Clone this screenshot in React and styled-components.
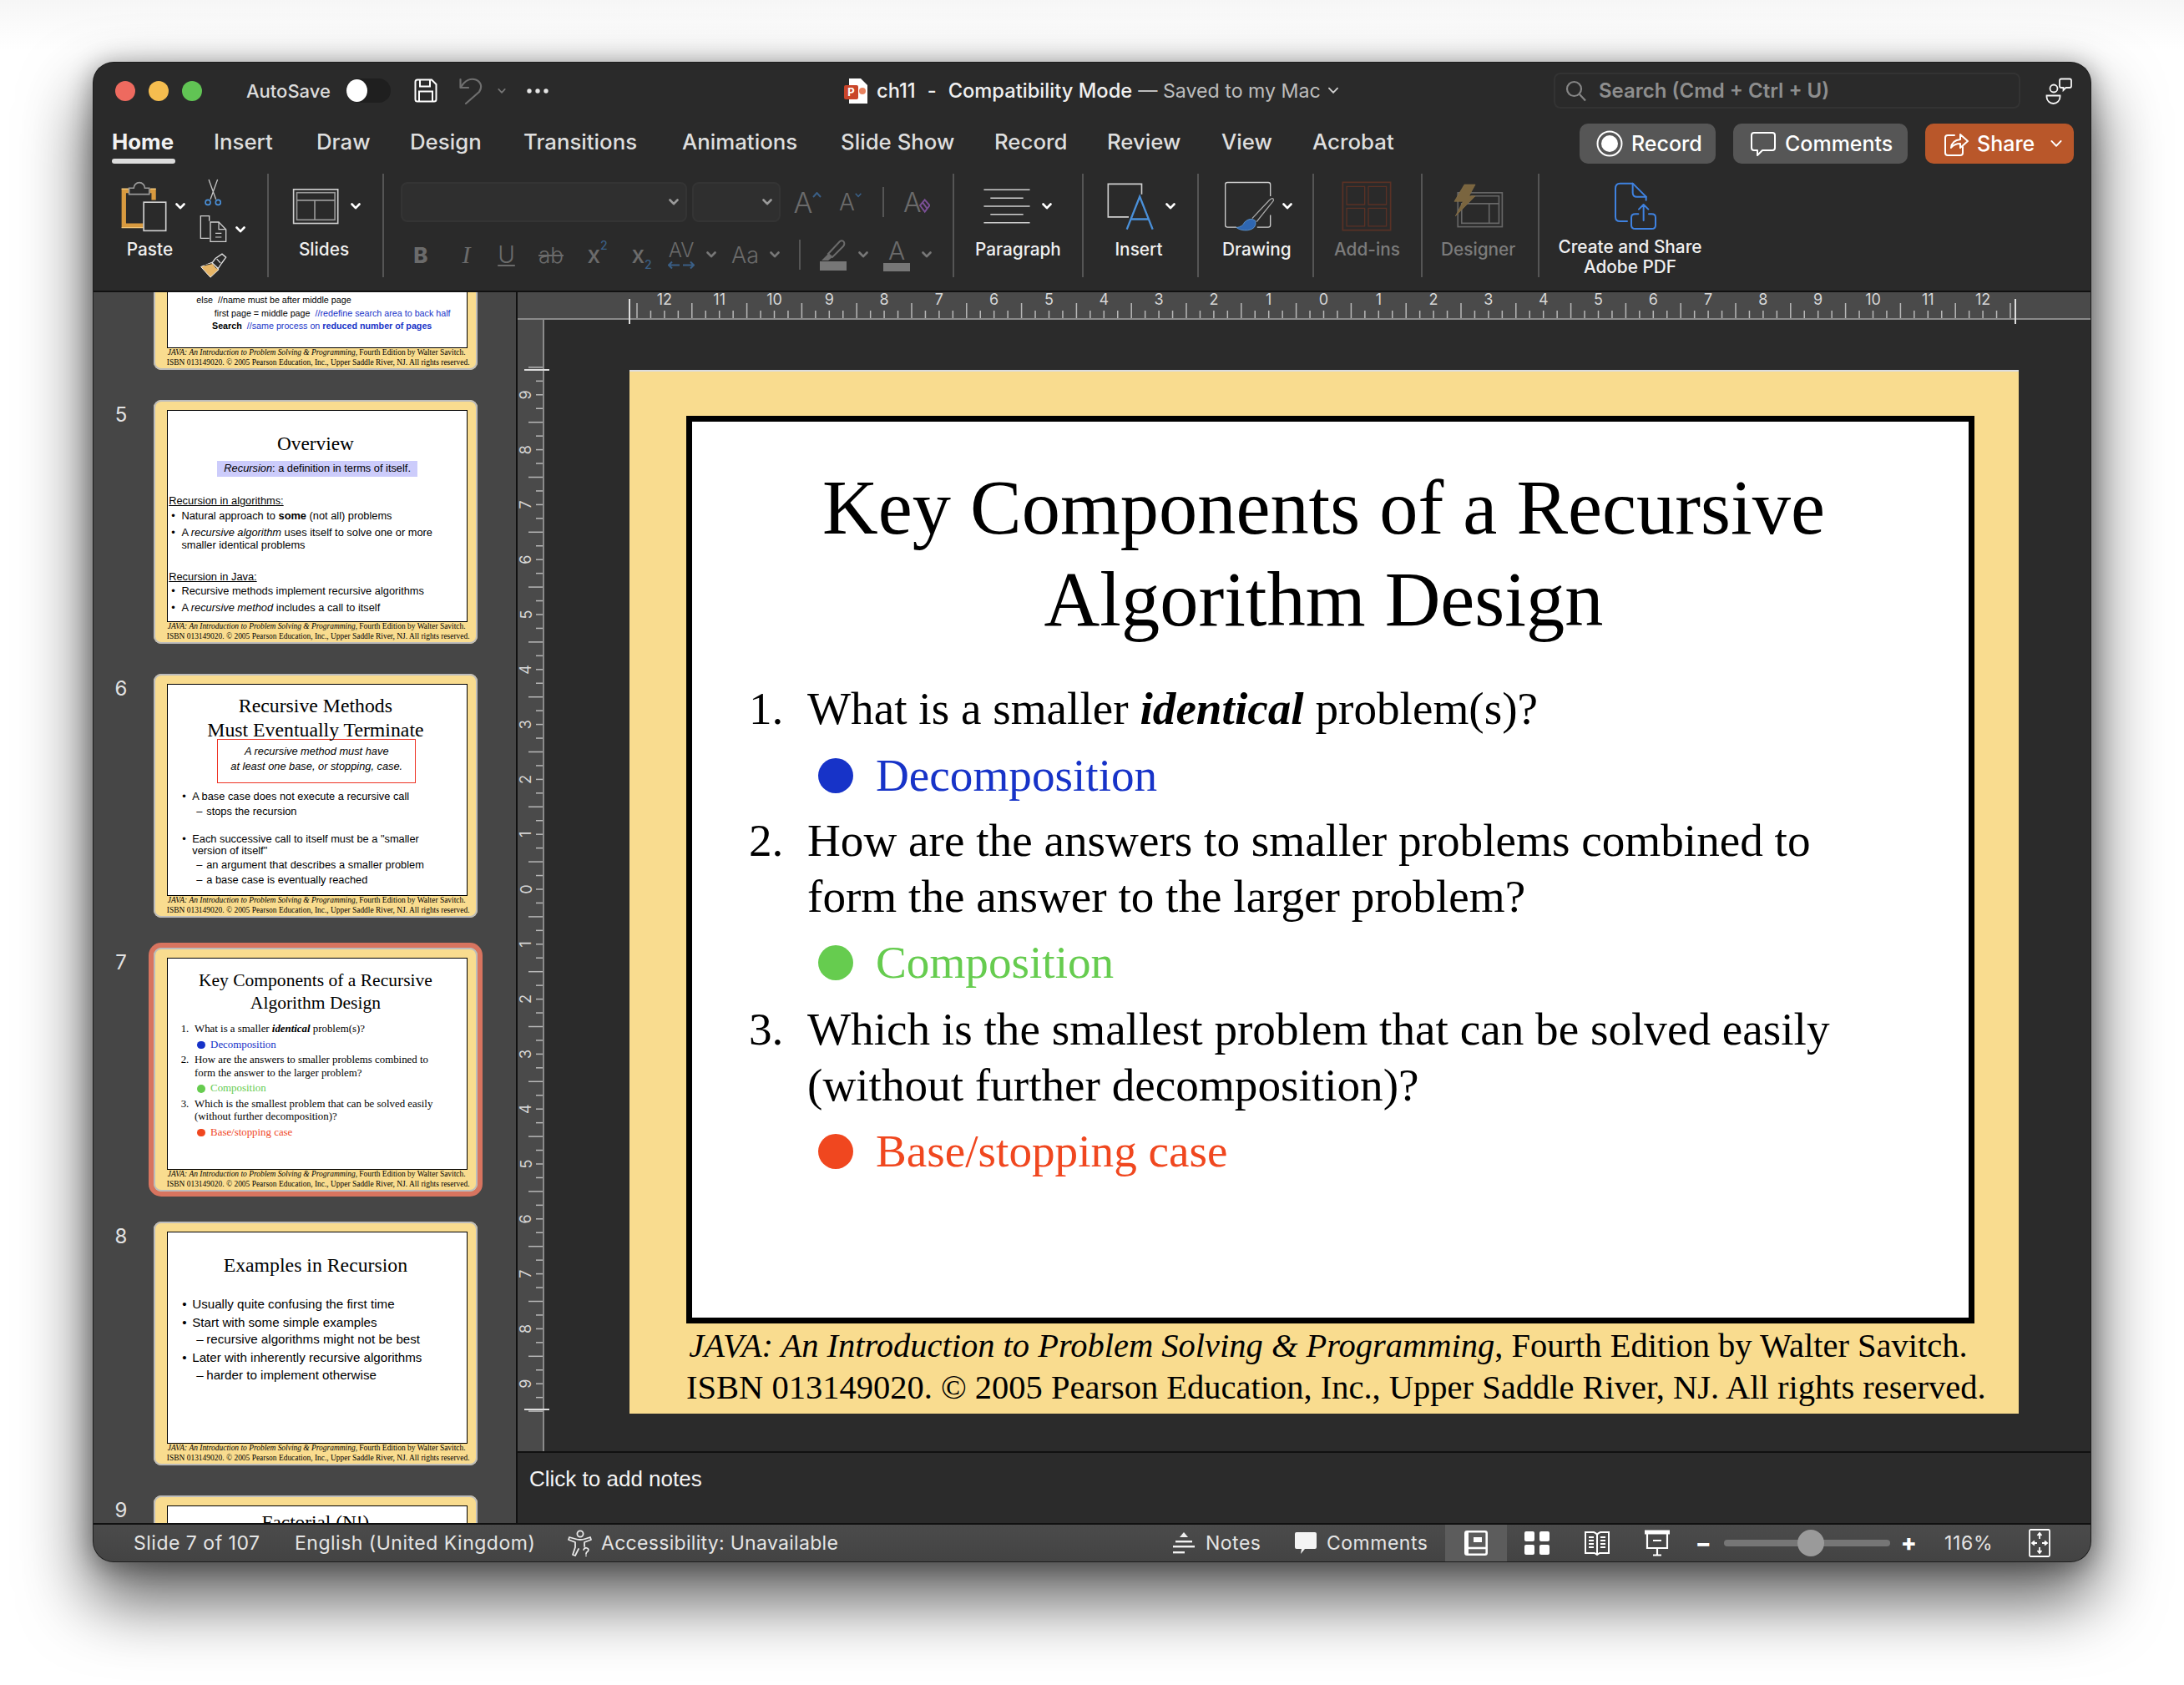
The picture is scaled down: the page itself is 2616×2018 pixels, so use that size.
import React from 'react';
import styled, { createGlobalStyle } from 'styled-components';

const UI = `Inter, "Noto Sans", sans-serif`;
const SERIF = `"Liberation Serif", "Times New Roman", serif`;
const SANS = `"Liberation Sans", Arial, sans-serif`;

const Global = createGlobalStyle`
  html, body { margin: 0; padding: 0; background: #fff; }
  #root { width: 2616px; height: 2018px; overflow: hidden; }
  * { box-sizing: border-box; }
`;

const Page = styled.div`
  width: 2616px;
  height: 2018px;
  padding: 75px 112px 0;
  background: linear-gradient(#f6f6f6, #fff 60px);
  font-family: ${UI};
`;

const Win = styled.div`
  width: 2392px;
  height: 1795px;
  border-radius: 24px;
  background: #2a2a2a;
  overflow: hidden;
  display: flex;
  flex-direction: column;
  color: #fff;
  position: relative;
  box-shadow: 0 0 0 1px #1e1e1e, 0 42px 80px 6px rgba(0, 0, 0, 0.62), 0 4px 28px 4px rgba(0, 0, 0, 0.3);
`;

/* title bar */
const TitleBar = styled.div`
  height: 67px;
  flex: none;
  display: flex;
  align-items: center;
  padding: 0 22px 0 26px;
`;
const Light = styled.span`
  width: 24px;
  height: 24px;
  border-radius: 50%;
  margin-right: 16px;
  background: ${p => p.$c};
`;
const AutoSave = styled.span`
  width: 120px;
  margin-left: 37px;
  font-size: 22px;
  font-weight: 500;
  color: #dcdcdc;
`;
const Toggle = styled.span`
  width: 53px;
  height: 29px;
  border-radius: 15px;
  background: #1f1f1f;
  display: flex;
  align-items: center;
`;
const Knob = styled.span`
  width: 25px;
  height: 27px;
  border-radius: 50%;
  background: #fff;
`;
const BarIcon = styled.span`
  display: flex;
  align-items: center;
  flex: none;
  margin-left: ${p => p.$ml || 0}px;
`;
const DocTitle = styled.span`
  margin-left: ${p => p.$ml || 0}px;
  font-size: ${p => (p.$dim ? 23.2 : 23.7)}px;
  font-weight: ${p => (p.$dim ? 400 : 500)};
  color: ${p => (p.$dim ? '#bdbdbd' : '#f0f0f0')};
  white-space: pre;
`;
const Search = styled.div`
  width: 559px;
  height: 43px;
  margin-left: auto;
  border: 2px solid #333;
  border-radius: 8px;
  display: flex;
  align-items: center;
  padding-left: 12px;
  gap: 14px;
  font-size: 24px;
  font-weight: 600;
  color: #8e8e8e;
`;

/* tabs */
const TabBar = styled.div`
  height: 66px;
  flex: none;
  display: flex;
  padding: 0 20px 0 22px;
`;
const Tab = styled.div`
  width: ${p => p.$w}px;
  height: 56px;
  padding-top: 10px;
  line-height: 36px;
  font-size: 25.8px;
  font-weight: ${p => (p.$on ? 700 : 500)};
  color: ${p => (p.$on ? '#f2f2f2' : '#dedede')};
  white-space: nowrap;
`;
const TabLine = styled.div`
  width: 76px;
  height: 6px;
  margin-top: 2px;
  border-radius: 3px;
  background: #dcdcdc;
`;
const Actions = styled.div`
  margin-left: auto;
  display: flex;
  gap: 21px;
  padding-top: 6px;
`;
const ActionBtn = styled.button`
  width: ${p => p.$w}px;
  height: 48px;
  padding: 0 0 0 ${p => p.$pl}px;
  border: 0;
  border-radius: 10px;
  background: ${p => (p.$share ? '#b9572a' : '#565656')};
  color: #fff;
  display: flex;
  align-items: center;
  gap: 10px;
  font-family: ${UI};
  font-size: 25px;
  font-weight: 500;
`;

/* ribbon */
const Ribbon = styled.div`
  height: 142px;
  flex: none;
  display: flex;
  border-bottom: 2px solid #111;
`;
const Group = styled.div`
  width: ${p => p.$w}px;
  height: 124px;
  padding-left: ${p => p.$pl}px;
  display: flex;
  flex: none;
  border-right: ${p => (p.$last ? 'none' : '2px solid #555')};
`;
const Tool = styled.div`
  display: flex;
  flex-direction: column;
  align-items: center;
  width: ${p => (p.$w ? `${p.$w}px` : 'auto')};
`;
const ToolRow = styled.div`
  height: 77px;
  padding: ${p => p.$pt || 0}px 0 0 ${p => p.$ml || 0}px;
  display: flex;
  align-items: center;
  gap: ${p => p.$gap ?? 14}px;
`;
const ToolLabel = styled.div`
  font-size: 20.8px;
  line-height: 28px;
  font-weight: 500;
  white-space: nowrap;
  text-align: center;
  padding-right: ${p => p.$pr || 0}px;
  color: ${p => (p.$dim ? '#7b7b7b' : '#f0f0f0')};
  ${p => p.$two && 'line-height: 24px; padding-top: 5px;'}
`;
const Clip = styled.div`
  margin-left: 16px;
  padding-top: 6px;
  display: flex;
  flex-direction: column;
`;
const ClipRow = styled.div`
  display: flex;
  align-items: center;
  gap: 9px;
  margin-top: ${p => p.$mt || 0}px;
  margin-left: ${p => p.$ml || 0}px;
`;
const FontCol = styled.div`
  padding-top: 10px;
`;
const FontRow = styled.div`
  display: flex;
  height: 48px;
`;
const FontRowB = styled(FontRow)`
  height: 40px;
  margin-top: 19px;
`;
const FontBox = styled.div`
  width: ${p => p.$w}px;
  height: 48px;
  margin-left: ${p => p.$ml || 0}px;
  border: 2px solid #343434;
  border-radius: 8px;
  background: #2f2f2f;
  display: flex;
  align-items: center;
  justify-content: flex-end;
  padding-right: 8px;
`;
const Cell = styled.span`
  width: ${p => p.$w}px;
  margin-left: ${p => p.$ml || 0}px;
  flex: none;
  display: flex;
  align-items: center;
  justify-content: center;
  white-space: nowrap;
  color: #6b6b6b;
  font-family: ${p => (p.$serif ? SERIF : UI)};
  font-size: ${p => p.$size || 28}px;
  font-weight: ${p => p.$weight || 300};
  font-style: ${p => (p.$italic ? 'italic' : 'normal')};
`;
const Stack = styled(Cell)`
  flex-direction: column;
  line-height: 1;
`;
const Index = styled.span`
  font-size: 14px;
  color: #3a5f86;
  align-self: ${p => (p.$up ? 'flex-start' : 'flex-end')};
`;
const Bar = styled.span`
  width: 32px;
  height: 11px;
  background: #777;
  display: block;
`;
const Rule = styled.span`
  width: 2px;
  height: 36px;
  margin: auto 0 auto ${p => p.$ml}px;
  flex: none;
  background: #555;
`;
const CaretSvg = styled.svg`
  margin-bottom: 18px;
`;
const EraserSvg = styled.svg`
  margin: 8px 0 0 -3px;
`;

/* work area */
const Body = styled.div`
  flex: 1;
  min-height: 0;
  display: flex;
`;
const Side = styled.div`
  width: 508px;
  flex: none;
  background: #464646;
  border-right: 2px solid #111;
  overflow: hidden;
`;
const SideList = styled.div`
  margin-top: -199px;
`;
const ThumbRow = styled.div`
  display: flex;
  margin-bottom: 36px;
`;
const ThumbNo = styled.div`
  width: 66px;
  margin-right: 6px;
  padding-top: 2px;
  text-align: center;
  font-size: 24px;
  line-height: 32px;
  color: #e2e2e2;
`;
const Thumb = styled.div`
  width: 388px;
  height: 292px;
  flex: none;
  border-radius: 9px;
  position: relative;
  box-shadow: ${p => (p.$on ? '0 0 0 6px #d8745f' : 'none')};
  &::after {
    content: '';
    position: absolute;
    inset: 0;
    border-radius: 9px;
    border: 2px solid #bcbcbc;
  }
`;
const ThumbClip = styled.div`
  width: 388px;
  height: 292px;
  overflow: hidden;
  border-radius: 9px;
`;

const Work = styled.div`
  flex: 1;
  min-width: 0;
  display: flex;
  flex-direction: column;
`;
const HRuler = styled.div`
  height: 33px;
  flex: none;
  background: #4a4a4a;
  border-bottom: 2px solid #8a8a8a;
  position: relative;
  z-index: 2;
`;
const RulerSvg = styled.svg`
  display: block;
  overflow: visible;
  font-family: ${UI};
`;
const Stage = styled.div`
  flex: 1;
  min-height: 0;
  display: flex;
`;
const VRuler = styled.div`
  width: 32px;
  flex: none;
  background: #4a4a4a;
  border-right: 2px solid #8a8a8a;
  position: relative;
  z-index: 2;
`;
const Canvas = styled.div`
  flex: 1;
  min-width: 0;
  padding: 60px 0 0 102px;
  background: #2b2b2b;
`;
const Notes = styled.div`
  height: 86px;
  flex: none;
  border-top: 2px solid #111;
  background: #2b2b2b;
  padding: 15px 0 0 14px;
  font-family: ${SANS};
  font-size: 26px;
  line-height: 32px;
  color: #f4f4f4;
`;

/* slide */
const Face = styled.div`
  width: 1664px;
  height: 1250px;
  padding: 53px 53px 0 68px;
  background: #f9dc8f;
  border-top: ${p => (p.$big ? '2px solid #ddd' : 'none')};
  zoom: ${p => (p.$big ? 1 : 0.2332)};
  color: #000;
  flex: none;
`;
const Frame = styled.div`
  height: 1087px;
  border: 7px solid #000;
  background: #fff;
  overflow: hidden;
`;
const Foot = styled.div`
  margin-top: 2px;
  padding-right: 5px;
  text-align: center;
  font-family: ${SERIF};
  font-size: 40.5px;
  line-height: 50px;
  white-space: nowrap;
`;
const Heading = styled.div`
  margin-top: ${p => p.$t}px;
  padding-right: 16px;
  text-align: center;
  font-family: ${SERIF};
  font-size: ${p => p.$size}px;
  line-height: ${p => p.$lh}px;
  white-space: nowrap;
`;
const Ask = styled.div`
  display: flex;
  margin-top: ${p => p.$t || 0}px;
  padding-left: 68px;
  font-family: ${SERIF};
  font-size: 55.2px;
  line-height: 67px;
  white-space: nowrap;
`;
const AskNo = styled.span`
  width: 70px;
  flex: none;
`;
const Answer = styled.div`
  display: flex;
  align-items: center;
  gap: 27px;
  margin-top: ${p => p.$t}px;
  padding-left: 151px;
  font-family: ${SERIF};
  font-size: 55.2px;
  line-height: 67px;
  color: ${p => p.$c};
  white-space: nowrap;
`;
const Dot = styled.span`
  width: 42px;
  height: 42px;
  border-radius: 50%;
  background: ${p => p.$c};
`;
const Line = styled.div`
  height: 60px;
  margin-top: ${p => p.$t || 0}px;
  padding-left: ${p => p.$x || 0}px;
  font-family: ${SANS};
  font-size: ${p => p.$size || 55}px;
  line-height: 60px;
  white-space: pre;
`;
const Mark = styled.span`
  display: inline-block;
  width: ${p => p.$w}px;
`;
const Banner = styled.div`
  width: 1028px;
  height: 81px;
  margin: 37px 0 0 255px;
  background: #ccccfb;
  font-family: ${SANS};
  font-size: 55px;
  line-height: 81px;
  text-align: center;
`;
const RedBox = styled.div`
  width: 1020px;
  height: 227px;
  margin: -17px 0 0 255px;
  border: 6px solid #ee3324;
  padding-top: 22px;
  font-family: ${SANS};
  font-size: 55px;
  font-style: italic;
  line-height: 75px;
  text-align: center;
  white-space: nowrap;
`;
const Hi = styled.span`
  color: #1733c8;
  font-weight: ${p => (p.$b ? 700 : 400)};
`;
const Under = styled.span`
  text-decoration: underline;
`;

/* status bar */
const Status = styled.div`
  height: 46px;
  flex: none;
  border-top: 2px solid #111;
  background: linear-gradient(#4b4b4b, #434343);
  display: flex;
  align-items: center;
  padding: 0 48px 0 48px;
  font-size: 23px;
  letter-spacing: 0.5px;
  color: #e4e4e4;
`;
const StatusText = styled.span`
  width: ${p => (p.$w ? `${p.$w}px` : 'auto')};
  margin-left: ${p => p.$ml || 0}px;
  flex: none;
  white-space: nowrap;
  letter-spacing: ${p => p.$ls ?? 0.5}px;
`;
const ZoomGlyph = styled(StatusText)`
  display: flex;
  justify-content: center;
  font-weight: 800;
  font-size: 28px;
  color: #fff;
`;
const StatusRight = styled.div`
  margin-left: auto;
  height: 100%;
  display: flex;
  align-items: center;
`;
const ViewBtn = styled.span`
  width: ${p => p.$w || 72}px;
  height: 100%;
  flex: none;
  display: flex;
  align-items: center;
  justify-content: center;
  background: ${p => (p.$on ? '#5c5c5c' : 'transparent')};
`;
const Zoomer = styled.span`
  width: 199px;
  height: 8px;
  margin-left: 19px;
  border-radius: 4px;
  background: #767676;
  position: relative;
  &::after {
    content: '';
    position: absolute;
    left: 88px;
    top: -12px;
    width: 32px;
    height: 32px;
    border-radius: 50%;
    background: #9a9a9a;
  }
`;

/* small drawings */
const Chev = ({ c = '#fff', w = 12, h = 8, sw = 2.6 }) => (
  <svg width={w} height={h} viewBox="0 0 12 8" fill="none" stroke={c} strokeWidth={sw} strokeLinecap="round" strokeLinejoin="round">
    <path d="M1.5 1.5 6 6.2l4.5-4.7" />
  </svg>
);
const PasteIcon = () => (
  <svg width="58" height="62" viewBox="40 35 175 185" fill="none">
    <path d="M74 72H56V197H126" stroke="#d89a3f" strokeWidth="16" />
    <path d="M150 72H164V105" stroke="#d89a3f" strokeWidth="16" />
    <path d="M48 65H74M48 205H126M152 65H172" stroke="#f0c579" strokeWidth="4" />
    <path d="M75 84V62H92A20 20 0 0 1 132 62H148V84Z" fill="#2a2a2a" stroke="#999" strokeWidth="5" />
    <rect x="128" y="113" width="80" height="103" stroke="#d0d0d0" strokeWidth="5" />
  </svg>
);
const Scissors = () => (
  <svg width="25" height="33" viewBox="335 25 75 100" fill="none">
    <path d="M356 28 382 100M388 28 362 100" stroke="#c4c4c4" strokeWidth="4" />
    <circle cx="353" cy="111" r="9" stroke="#4a90d9" strokeWidth="5" />
    <circle cx="390" cy="111" r="9" stroke="#4a90d9" strokeWidth="5" />
  </svg>
);
const CopyIcon = () => (
  <svg width="35" height="35" viewBox="320 155 105 105" fill="none" stroke="#cfcfcf" strokeWidth="4">
    <path d="M358 178V160H327V240H358" />
    <path d="M362 182H392L418 208V252H362Z" />
    <path d="M392 182V208H418M380 222H402M380 236H402" strokeWidth="3.5" />
  </svg>
);
const PainterIcon = () => (
  <svg width="35" height="32" viewBox="320 288 105 95" fill="none">
    <path d="M328 340 368 324 392 350 362 378Z" fill="#e6b566" stroke="#eee" strokeWidth="3" />
    <path d="M340 335 370 328 384 346" stroke="#2a2a2a" strokeWidth="3" />
    <path d="M368 326 380 310 404 294 418 306 402 328 390 346Z" fill="#2a2a2a" stroke="#ddd" strokeWidth="4" />
    <path d="M385 312 398 326" stroke="#ddd" strokeWidth="4" />
  </svg>
);
const LayoutIcon = () => (
  <svg width="56" height="44" viewBox="658 56 172 132" fill="none">
    <rect x="663" y="60" width="163" height="125" stroke="#d0d0d0" strokeWidth="5" />
    <rect x="675" y="72" width="140" height="100" stroke="#999" strokeWidth="5" />
    <path d="M675 100H815M741 100V172" stroke="#999" strokeWidth="5" />
  </svg>
);
const ParagraphIcon = () => (
  <svg width="56" height="42" viewBox="90 56 168 128" fill="none" stroke="#cfcfcf" strokeWidth="4.5">
    <path d="M90 60H258M114 90H234M90 120H258M114 150H234M90 180H258" />
  </svg>
);
const InsertIcon = () => (
  <svg width="56" height="56" viewBox="526 38 170 170" fill="none">
    <path d="M605 162H530V42H652V80" stroke="#cfcfcf" strokeWidth="5" />
    <path d="M598 207 645 88 692 207M612 170H680" stroke="#4a90d9" strokeWidth="7" />
  </svg>
);
const DrawingIcon = () => (
  <svg width="61" height="60" viewBox="940 38 184 180" fill="none">
    <path d="M1108 92V50Q1108 42 1100 42H953Q945 42 945 50V196Q945 204 953 204H985M1060 204H1100Q1108 204 1108 196V160" stroke="#cfcfcf" strokeWidth="4" />
    <path d="M1042 172 1104 106Q1120 92 1119 108L1058 184" stroke="#a8a8a8" strokeWidth="4" />
    <path d="M985 205Q1008 202 1014 186 1034 166 1054 180 1060 210 1026 215 1000 217 985 205Z" fill="#2f67b2" stroke="#6fa8e0" strokeWidth="2" />
  </svg>
);
const AddinsIcon = () => (
  <svg width="60" height="60" viewBox="1370 34 178 178" fill="none" stroke="#5a3125">
    <rect x="1374" y="38" width="170" height="170" strokeWidth="5" />
    <path d="M1388 53h64v64h-64zM1465 53h64v64h-64zM1388 130h64v64h-64zM1465 130h64v64h-64z" strokeWidth="4" />
  </svg>
);
const DesignerIcon = () => (
  <svg width="60" height="55" viewBox="205 27 184 162" fill="none">
    <rect x="221" y="60" width="163" height="125" stroke="#676767" strokeWidth="5" />
    <path d="M235 172V100H372V172ZM336 100V172M270 72H372V100" stroke="#676767" strokeWidth="5" />
    <path d="M245 30H285L262 72H285L212 146 240 92H208Z" fill="#7a653f" stroke="#8a7248" strokeWidth="2" />
  </svg>
);
const PdfIcon = () => (
  <svg width="52" height="58" viewBox="792 47 156 174" fill="none" stroke="#3f82e0" strokeWidth="6" strokeLinecap="round" strokeLinejoin="round">
    <path d="M840 188H815Q798 188 798 172V70Q798 52 815 52H860L908 100V112" />
    <path d="M860 52V85Q860 100 875 100H908" />
    <path d="M880 162H870Q855 162 855 175V202Q855 215 870 215H928Q942 215 942 202V175Q942 162 928 162H918" />
    <path d="M899 185V128M882 145 899 128 916 145" />
  </svg>
);
const SearchIcon = () => (
  <svg width="26" height="26" viewBox="0 0 26 26" fill="none" stroke="#858585" strokeWidth="2.2">
    <circle cx="10.5" cy="10.5" r="8.5" />
    <path d="m17 17 7 7.5" />
  </svg>
);
const PeopleIcon = () => (
  <svg width="32" height="32" viewBox="0 0 32 32" fill="none" stroke="#f4f4f4" strokeWidth="1.8">
    <circle cx="10" cy="13" r="4.5" />
    <path d="M1.500 21.500H17.500V23A8 8 0 0 1 1.500 23Z" />
    <path d="M19 1.500H29Q31 1.500 31 3.500V10Q31 12 29 12H24.500L21.500 15V12H19Q17 12 17 10V3.500Q17 1.500 19 1.500Z" />
  </svg>
);
const RecordIcon = () => (
  <svg width="32" height="32" viewBox="0 0 32 32" fill="none">
    <circle cx="16" cy="16" r="14.5" stroke="#fff" strokeWidth="2" />
    <circle cx="16" cy="16" r="10" fill="#fff" />
  </svg>
);
const CommentIcon = () => (
  <svg width="32" height="32" viewBox="0 0 32 32" fill="none" stroke="#fff" strokeWidth="2" strokeLinejoin="round">
    <path d="M5 3H27Q30 3 30 6V21Q30 24 27 24H15L9 30V24H5Q2 24 2 21V6Q2 3 5 3Z" />
  </svg>
);
const ShareIcon = () => (
  <svg width="30" height="32" viewBox="0 0 30 32" fill="none" stroke="#fff" strokeWidth="2" strokeLinecap="round" strokeLinejoin="round">
    <path d="M13 6H5Q2 6 2 9V27Q2 30 5 30H20Q23 30 23 27V20" />
    <path d="M9 21Q10 12 20 11V5L29 13 20 21V16Q13 16 9 21Z" />
  </svg>
);
const SaveIcon = () => (
  <svg width="28" height="29" viewBox="0 0 28 29" fill="none" stroke="#fff" strokeWidth="2">
    <path d="M4 1.500H21L26.500 7V25Q26.500 27.500 24 27.500H4Q1.500 27.500 1.500 25V4Q1.500 1.500 4 1.500Z" />
    <path d="M7 1.500V9.500H19V1.500M6 27.500V15.500H22V27.500" />
  </svg>
);
const UndoIcon = () => (
  <svg width="28" height="32" viewBox="0 0 28 32" fill="none" stroke="#6f6f6f" strokeWidth="2.2" strokeLinecap="round" strokeLinejoin="round">
    <path d="M1.500 2V12H11" />
    <path d="M2 11.500C7 3 14 0.500 20 2.500 27 5.500 27.500 12 24 17L8 31" />
  </svg>
);
const DotsIcon = () => (
  <svg width="26" height="6" viewBox="0 0 26 6" fill="#e6e6e6">
    <circle cx="3" cy="3" r="2.7" />
    <circle cx="13" cy="3" r="2.7" />
    <circle cx="23" cy="3" r="2.7" />
  </svg>
);
const PptIcon = () => (
  <svg width="28" height="30" viewBox="0 0 28 30">
    <path d="M6 0H20L28 8V30H6Z" fill="#fff" />
    <rect x="0" y="8" width="17" height="17" rx="2" fill="#c9452a" />
    <text x="8.500" y="21" textAnchor="middle" fontSize="13" fontWeight="700" fontFamily="Inter, sans-serif" fill="#fff">P</text>
    <circle cx="22" cy="15" r="4" fill="#e8825f" />
  </svg>
);
const Caret = ({ down }) => (
  <CaretSvg width="11" height="7" viewBox="0 0 11 7" fill="none" stroke="#3a5f86" strokeWidth="2">
    <path d={down ? 'M1 1 5.500 6 10 1' : 'M1 6 5.500 1 10 6'} />
  </CaretSvg>
);
const EraserIcon = () => (
  <EraserSvg width="14" height="22" viewBox="0 0 14 22" fill="none" stroke="#7a4f95" strokeWidth="2">
    <path d="M7 4 13 11 7 19 1 11ZM4 7 10 15" />
  </EraserSvg>
);
const Arrows = () => (
  <svg width="32" height="11" viewBox="0 0 32 11" fill="none" stroke="#3a5f86" strokeWidth="2">
    <path d="M14 5.500H1M5 1.500 1 5.500 5 9.500M18 5.500H31M27 1.500 31 5.500 27 9.500" />
  </svg>
);
const PenIcon = () => (
  <svg width="32" height="26" viewBox="0 0 32 26" fill="none">
    <path d="M10 17 24 2Q27 0 29 3 30 6 28 8L15 21Z" stroke="#6b6b6b" strokeWidth="2" />
    <path d="M10 17 15 21 10 25 2 25Z" fill="#6b6b6b" />
  </svg>
);
const A11yIcon = () => (
  <svg width="30" height="32" viewBox="0 0 30 32" fill="none" stroke="#e8e8e8" strokeWidth="1.8" strokeLinejoin="round" strokeLinecap="round">
    <circle cx="15" cy="5" r="3.6" />
    <path d="M2 9 9 11Q15 13 21 11L27 9 28 12 20 15V20M2 9 1 12 9 15V21L6 30 9 31 13 23" />
    <path d="M19 24Q20 21 23 22 26 23 24 26 22 27 22 29M22 31.500V31.600" />
  </svg>
);
const NotesIcon = () => (
  <svg width="26" height="26" viewBox="0 0 26 26" fill="#f0f0f0">
    <path d="M13 0 18 6H8Z" />
    <rect x="3" y="10" width="20" height="2.4" />
    <rect x="0" y="16" width="26" height="2.4" />
    <rect x="0" y="23" width="14" height="2.4" />
  </svg>
);
const NoteBubble = () => (
  <svg width="26" height="28" viewBox="0 0 26 28" fill="#f4f4f4">
    <path d="M2 1H24Q26 1 26 3V19Q26 21 24 21H12L7 27 8 21H2Q0 21 0 19V3Q0 1 2 1Z" />
  </svg>
);
const NormalView = () => (
  <svg width="28" height="30" viewBox="0 0 28 30" fill="none" stroke="#fff" strokeWidth="2.6">
    <rect x="1.300" y="1.300" width="25.400" height="27.400" rx="2" />
    <path d="M1.300 21H26.700" />
    <rect x="11" y="8" width="10" height="6" fill="#fff" strokeWidth="0" />
    <path d="M2 2H5V28H2Z" fill="#fff" strokeWidth="0" />
  </svg>
);
const GridView = () => (
  <svg width="32" height="28" viewBox="0 0 32 28" fill="#fff">
    <rect x="1" y="0" width="12" height="12" rx="2" />
    <rect x="19" y="0" width="12" height="12" rx="2" />
    <rect x="1" y="16" width="12" height="12" rx="2" />
    <rect x="19" y="16" width="12" height="12" rx="2" />
  </svg>
);
const BookView = () => (
  <svg width="30" height="30" viewBox="0 0 30 30" fill="none" stroke="#fff" strokeWidth="2">
    <path d="M1 2H11Q14 3 15 5 16 3 19 2H29V27H18L15 29 12 27H1ZM15 5V29" />
    <path d="M5 8H11M5 12H11M5 16H11M5 20H11M19 8H25M19 12H25M19 16H25M19 20H25" />
  </svg>
);
const ShowView = () => (
  <svg width="30" height="32" viewBox="0 0 30 32" fill="none" stroke="#fff" strokeWidth="2.2">
    <path d="M0 3H30" strokeWidth="5" />
    <path d="M3 3V22H27V3M15 22V30M10 30.500H20M10 13H20" />
  </svg>
);
const FitIcon = () => (
  <svg width="26" height="34" viewBox="0 0 26 34" fill="none" stroke="#fff" strokeWidth="1.8">
    <rect x="1" y="1" width="24" height="32" rx="1.500" />
    <path d="M13 5V12M10.500 8 13 5 15.500 8M13 22V29M10.500 26 13 29 15.500 26M4 17H10M7 14.500 4 17 7 19.500M22 17H16M19 14.500 22 17 19 19.500" />
  </svg>
);

/* rulers */
const HTicks = () => {
  const x0 = 965.5;
  const ticks = [];
  for (let i = -50; i <= 50; i++) {
    const x = x0 + i * 16.45;
    const half = Math.abs(i) % 4 === 2;
    ticks.push(<line key={i} x1={x} x2={x} y1={half ? 13 : 22} y2="31" stroke="#b8b8b8" strokeWidth="1.5" />);
  }
  const nums = [];
  for (let n = -12; n <= 12; n++) {
    nums.push(<text key={n} x={x0 + n * 65.8} y="15" textAnchor="middle" fontSize="18" fill="#d6d6d6">{Math.abs(n)}</text>);
  }
  return (
    <RulerSvg width="1884" height="31">
      {ticks}
      {nums}
      <line x1="134" x2="134" y1="8" y2="38" stroke="#ddd" strokeWidth="2" />
      <line x1="1794" x2="1794" y1="8" y2="38" stroke="#ddd" strokeWidth="2" />
    </RulerSvg>
  );
};
const VTicks = () => {
  const y0 = 682;
  const ticks = [];
  for (let i = -38; i <= 38; i++) {
    const y = y0 + i * 16.45;
    const half = Math.abs(i) % 4 === 2;
    ticks.push(<line key={i} x1={half ? 13 : 22} x2="30" y1={y} y2={y} stroke="#b8b8b8" strokeWidth="1.5" />);
  }
  const nums = [];
  for (let n = -9; n <= 9; n++) {
    const y = y0 + n * 65.8;
    nums.push(<text key={n} x="10" y={y} textAnchor="middle" dominantBaseline="central" fontSize="18" fill="#d6d6d6" transform={`rotate(-90 10 ${y})`}>{Math.abs(n)}</text>);
  }
  return (
    <RulerSvg width="30" height="1355">
      {ticks}
      {nums}
      <line x1="8" x2="38" y1="60" y2="60" stroke="#ddd" strokeWidth="2" />
      <line x1="8" x2="38" y1="1305" y2="1305" stroke="#ddd" strokeWidth="2" />
    </RulerSvg>
  );
};

/* slide contents */
const Slide = ({ big, children }) => (
  <Face $big={big}>
    <Frame>{children}</Frame>
    <Foot>
      <i>JAVA: An Introduction to Problem Solving &amp; Programming</i>, Fourth Edition by Walter Savitch.<br />
      ISBN 013149020. © 2005 Pearson Education, Inc., Upper Saddle River, NJ. All rights reserved.
    </Foot>
  </Face>
);

const Slide4 = () => (
  <>
    <Line $t={810} $x={148} $size={46}>else  //name must be after middle page</Line>
    <Line $t={9} $x={240} $size={46}>first page = middle page  <Hi>//redefine search area to back half</Hi></Line>
    <Line $t={4} $x={228} $size={46}><b>Search</b>  <Hi>//same process on <Hi $b>reduced number of pages</Hi></Hi></Line>
  </>
);
const Slide5 = () => (
  <>
    <Heading $t={119} $size={100} $lh={100}>Overview</Heading>
    <Banner><i>Recursion</i>: a definition in terms of itself.</Banner>
    <Line $t={93} $x={6}><Under>Recursion in algorithms:</Under></Line>
    <Line $t={21} $x={19}><Mark $w={52}>•</Mark>Natural approach to <b>some</b> (not all) problems</Line>
    <Line $t={22} $x={19}><Mark $w={52}>•</Mark>A <i>recursive algorithm</i> uses itself to solve one or more</Line>
    <Line $t={4} $x={71}>smaller identical problems</Line>
    <Line $t={103} $x={6}><Under>Recursion in Java:</Under></Line>
    <Line $t={17} $x={19}><Mark $w={52}>•</Mark>Recursive methods implement recursive algorithms</Line>
    <Line $t={22} $x={19}><Mark $w={52}>•</Mark>A <i>recursive method</i> includes a call to itself</Line>
  </>
);
const Slide6 = () => (
  <>
    <Heading $t={46} $size={102} $lh={124}>Recursive Methods<br />Must Eventually Terminate</Heading>
    <RedBox>A recursive method must have<br />at least one base, or stopping, case.</RedBox>
    <Line $t={40} $x={75}><Mark $w={51}>•</Mark>A base case does not execute a recursive call</Line>
    <Line $t={17} $x={148}><Mark $w={51}>–</Mark>stops the recursion</Line>
    <Line $t={81} $x={75}><Mark $w={51}>•</Mark>Each successive call to itself must be a "smaller</Line>
    <Line $t={2} $x={126}>version of itself"</Line>
    <Line $t={11} $x={148}><Mark $w={51}>–</Mark>an argument that describes a smaller problem</Line>
    <Line $t={17} $x={148}><Mark $w={51}>–</Mark>a base case is eventually reached</Line>
  </>
);
const Slide7 = ({ thumb }) => (
  <>
    <Heading $t={thumb ? 53 : 48} $size={92.4} $lh={thumb ? 117 : 110}>Key Components of a Recursive<br />Algorithm Design</Heading>
    <Ask $t={42}><AskNo>1.</AskNo><span>What is a smaller <b><i>identical</i></b> problem(s)?</span></Ask>
    <Answer $t={13} $c="#1733c8"><Dot $c="#1733c8" />Decomposition</Answer>
    <Ask $t={11}><AskNo>2.</AskNo>How are the answers to smaller problems combined to</Ask>
    <Ask><AskNo />form the answer to the larger problem?</Ask>
    <Answer $t={12} $c="#66cc4f"><Dot $c="#66cc4f" />Composition</Answer>
    <Ask $t={13}><AskNo>3.</AskNo>Which is the smallest problem that can be solved easily</Ask>
    <Ask><AskNo />(without further decomposition)?</Ask>
    <Answer $t={12} $c="#f0471f"><Dot $c="#f0471f" />Base/stopping case</Answer>
  </>
);
const Slide8 = () => (
  <>
    <Heading $t={119} $size={102} $lh={100}>Examples in Recursion</Heading>
    <Line $t={117} $x={75} $size={65}><Mark $w={51}>•</Mark>Usually quite confusing the first time</Line>
    <Line $t={34} $x={75} $size={65}><Mark $w={51}>•</Mark>Start with some simple examples</Line>
    <Line $t={28} $x={148} $size={65}><Mark $w={51}>–</Mark>recursive algorithms might not be best</Line>
    <Line $t={36} $x={75} $size={65}><Mark $w={51}>•</Mark>Later with inherently recursive algorithms</Line>
    <Line $t={30} $x={148} $size={65}><Mark $w={51}>–</Mark>harder to implement otherwise</Line>
  </>
);
const Slide9 = () => <Heading $t={32} $size={100} $lh={100}>Factorial (N!)</Heading>;

const thumbs = [
  { no: '', body: <Slide4 /> },
  { no: '5', body: <Slide5 /> },
  { no: '6', body: <Slide6 /> },
  { no: '7', body: <Slide7 thumb />, on: true },
  { no: '8', body: <Slide8 /> },
  { no: '9', body: <Slide9 /> },
];
const tabs = [
  ['Home', 122], ['Insert', 123], ['Draw', 112], ['Design', 136], ['Transitions', 190], ['Animations', 190],
  ['Slide Show', 184], ['Record', 135], ['Review', 137], ['View', 109], ['Acrobat', 110],
];

export default function App() {
  return (
    <>
      <Global />
      <Page>
        <Win>
          <TitleBar>
            <Light $c="#ee6a5f" />
            <Light $c="#f5bd4f" />
            <Light $c="#61c454" />
            <AutoSave>AutoSave</AutoSave>
            <Toggle><Knob /></Toggle>
            <BarIcon $ml={28}><SaveIcon /></BarIcon>
            <BarIcon $ml={26}><UndoIcon /></BarIcon>
            <BarIcon $ml={18}><Chev c="#777" w={10} sw={2} /></BarIcon>
            <BarIcon $ml={25}><DotsIcon /></BarIcon>
            <BarIcon $ml={354}><PptIcon /></BarIcon>
            <DocTitle $ml={11}>ch11</DocTitle>
            <DocTitle $ml={14}>-</DocTitle>
            <DocTitle $ml={14}>Compatibility Mode</DocTitle>
            <DocTitle $dim $ml={7}>— Saved to my Mac</DocTitle>
            <BarIcon $ml={8}><Chev c="#cfcfcf" w={14} h={9} sw={1.6} /></BarIcon>
            <Search><SearchIcon />Search (Cmd + Ctrl + U)</Search>
            <BarIcon $ml={30}><PeopleIcon /></BarIcon>
          </TitleBar>

          <TabBar>
            {tabs.map(([t, w]) => (
              <Tab key={t} $w={w} $on={t === 'Home'}>{t}{t === 'Home' && <TabLine />}</Tab>
            ))}
            <Actions>
              <ActionBtn $w={163} $pl={20}><RecordIcon />Record</ActionBtn>
              <ActionBtn $w={209} $pl={20}><CommentIcon />Comments</ActionBtn>
              <ActionBtn $w={178} $pl={22} $share><ShareIcon />Share<BarIcon $ml={8}><Chev w={16} h={10} sw={1.5} /></BarIcon></ActionBtn>
            </Actions>
          </TabBar>

          <Ribbon>
            <Group $w={210} $pl={31}>
              <Tool>
                <ToolRow $gap={9}><PasteIcon /><Chev /></ToolRow>
                <ToolLabel $pr={6}>Paste</ToolLabel>
              </Tool>
              <Clip>
                <ClipRow $ml={5}><Scissors /></ClipRow>
                <ClipRow $mt={10}><CopyIcon /><Chev /></ClipRow>
                <ClipRow $mt={10}><PainterIcon /></ClipRow>
              </Clip>
            </Group>
            <Group $w={138} $pl={28}>
              <Tool>
                <ToolRow><LayoutIcon /><Chev /></ToolRow>
                <ToolLabel $pr={6}>Slides</ToolLabel>
              </Tool>
            </Group>
            <Group $w={683} $pl={20}>
              <FontCol>
                <FontRow>
                  <FontBox $w={343}><Chev c="#9a9a9a" /></FontBox>
                  <FontBox $w={106} $ml={6}><Chev c="#9a9a9a" /></FontBox>
                  <Cell $w={35} $ml={15} $size={34}>A<Caret /></Cell>
                  <Cell $w={27} $ml={20} $size={28}>A<Caret down /></Cell>
                  <Rule $ml={25} />
                  <Cell $w={32} $ml={23} $size={32}>A<EraserIcon /></Cell>
                </FontRow>
                <FontRowB>
                  <Cell $w={16} $ml={16} $weight={800} $size={26}>B</Cell>
                  <Cell $w={13} $ml={40} $serif $italic $size={30} $weight={400}>I</Cell>
                  <Cell $w={19} $ml={32} $size={28}><Under>U</Under></Cell>
                  <Cell $w={32} $ml={28} $size={26}><s>ab</s></Cell>
                  <Cell $w={23} $ml={28} $size={28} $weight={500}>x<Index $up>2</Index></Cell>
                  <Cell $w={23} $ml={30} $size={28} $weight={500}>x<Index>2</Index></Cell>
                  <Stack $w={32} $ml={20} $size={24}>AV<Arrows /></Stack>
                  <Cell $w={12} $ml={14}><Chev c="#777" /></Cell>
                  <Cell $w={33} $ml={18} $size={27}>Aa</Cell>
                  <Cell $w={12} $ml={13}><Chev c="#777" /></Cell>
                  <Rule $ml={23} />
                  <Stack $w={32} $ml={23}><PenIcon /><Bar /></Stack>
                  <Cell $w={12} $ml={14}><Chev c="#777" /></Cell>
                  <Stack $w={32} $ml={18} $size={30}>A<Bar /></Stack>
                  <Cell $w={12} $ml={14}><Chev c="#777" /></Cell>
                </FontRowB>
              </FontCol>
            </Group>
            <Group $w={155} $pl={25}>
              <Tool>
                <ToolRow><ParagraphIcon /><Chev /></ToolRow>
                <ToolLabel>Paragraph</ToolLabel>
              </Tool>
            </Group>
            <Group $w={138} $pl={28}>
              <Tool>
                <ToolRow><InsertIcon /><Chev /></ToolRow>
                <ToolLabel $pr={6}>Insert</ToolLabel>
              </Tool>
            </Group>
            <Group $w={138} $pl={28}>
              <Tool>
                <ToolRow $gap={9}><DrawingIcon /><Chev /></ToolRow>
                <ToolLabel $pr={4}>Drawing</ToolLabel>
              </Tool>
            </Group>
            <Group $w={130} $pl={24}>
              <Tool>
                <ToolRow><AddinsIcon /></ToolRow>
                <ToolLabel $dim>Add-ins</ToolLabel>
              </Tool>
            </Group>
            <Group $w={140} $pl={22}>
              <Tool>
                <ToolRow><DesignerIcon /></ToolRow>
                <ToolLabel $dim>Designer</ToolLabel>
              </Tool>
            </Group>
            <Group $w={220} $pl={22} $last>
              <Tool $w={173}>
                <ToolRow $pt={6} $ml={12}><PdfIcon /></ToolRow>
                <ToolLabel $two>Create and Share<br />Adobe PDF</ToolLabel>
              </Tool>
            </Group>
          </Ribbon>

          <Body>
            <Side>
              <SideList>
                {thumbs.map((t, i) => (
                  <ThumbRow key={i}>
                    <ThumbNo>{t.no}</ThumbNo>
                    <Thumb $on={t.on}>
                      <ThumbClip><Slide>{t.body}</Slide></ThumbClip>
                    </Thumb>
                  </ThumbRow>
                ))}
              </SideList>
            </Side>
            <Work>
              <HRuler><HTicks /></HRuler>
              <Stage>
                <VRuler><VTicks /></VRuler>
                <Canvas><Slide big><Slide7 /></Slide></Canvas>
              </Stage>
              <Notes>Click to add notes</Notes>
            </Work>
          </Body>

          <Status>
            <StatusText $w={193}>Slide 7 of 107</StatusText>
            <StatusText $w={327}>English (United Kingdom)</StatusText>
            <A11yIcon />
            <StatusText $ml={10} $ls={0.3}>Accessibility: Unavailable</StatusText>
            <StatusRight>
              <NotesIcon />
              <StatusText $ml={13} $w={66}>Notes</StatusText>
              <BarIcon $ml={41}><NoteBubble /></BarIcon>
              <StatusText $ml={12} $w={122}>Comments</StatusText>
              <BarIcon $ml={20} />
              <ViewBtn $on $w={74}><NormalView /></ViewBtn>
              <ViewBtn><GridView /></ViewBtn>
              <ViewBtn><BookView /></ViewBtn>
              <ViewBtn><ShowView /></ViewBtn>
              <ZoomGlyph $ml={14} $w={11}>–</ZoomGlyph>
              <Zoomer />
              <ZoomGlyph $ml={15} $w={15}>+</ZoomGlyph>
              <StatusText $ml={35} $w={58} $ls={0.7}>116%</StatusText>
              <BarIcon $ml={43}><FitIcon /></BarIcon>
            </StatusRight>
          </Status>
        </Win>
      </Page>
    </>
  );
}
